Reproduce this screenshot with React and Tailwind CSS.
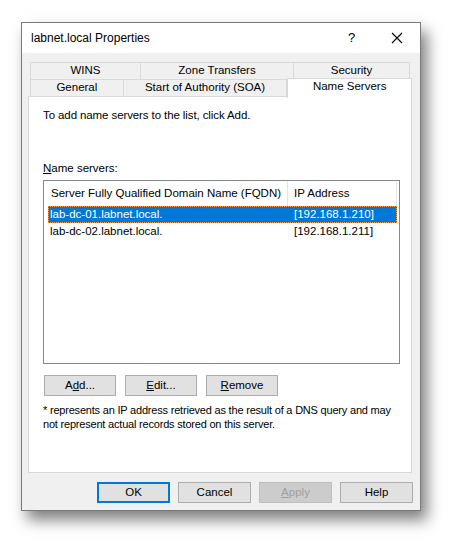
import React from "react";

const font = { fontFamily: '"Liberation Sans", Arial, sans-serif' };

function Btn({ children, primary, disabled, w = "w-[73px]" }) {
  let cls = "border-[#adadad] bg-[#e1e1e1] text-black";
  if (primary) cls = "border-2 border-[#0078d7] bg-[#e1e1e1] text-black";
  if (disabled) cls = "border-[#bfbfbf] bg-[#cccccc] text-[#a0a0a0]";
  return (
    <div
      className={`${w} h-[21px] border flex items-center justify-center text-[11.5px] ${cls}`}
    >
      {children}
    </div>
  );
}

function Tab({ label, w, selected }) {
  if (selected) {
    return (
      <div
        className={`${w} h-[20px] -mt-[2px] -mb-[1px] relative z-10 bg-white border border-b-0 border-[#d9d9d9] flex items-center justify-center text-[11.5px] pb-[3px]`}
      >
        {label}
      </div>
    );
  }
  return (
    <div
      className={`${w} h-[18px] bg-[#f0f0f0] border border-[#d9d9d9] -ml-px first:ml-0 flex items-center justify-center text-[11.5px]`}
    >
      {label}
    </div>
  );
}

export default function App() {
  return (
    <div className="w-[463px] h-[553px] bg-white pl-[21px] pt-[22px]" style={font}>
      <div className="w-[400px] h-[489px] border border-[#7a7a7a] bg-[#f0f0f0] shadow-[6px_9px_14px_rgba(0,0,0,0.5)] flex flex-col">
        {/* Title bar */}
        <div className="h-[30px] bg-white flex items-center pl-[9px] text-[12px] text-black">
          <span className="flex-1">labnet.local Properties</span>
          <span className="w-[45px] text-center text-[13px]">?</span>
          <span className="w-[45px] flex justify-center mr-[1px]">
            <svg width="12" height="12" viewBox="0 0 12 12">
              <path d="M1 1L11 11M11 1L1 11" stroke="#000" strokeWidth="1.1" />
            </svg>
          </span>
        </div>

        {/* Body */}
        <div className="flex-1 pl-[6px] pr-[8px] pt-[9px]">
          {/* Tabs */}
          <div className="pl-[2px]">
            <div className="flex">
              <Tab label="WINS" w="w-[111px]" />
              <Tab label="Zone Transfers" w="w-[154px]" />
              <Tab label="Security" w="w-[117px]" />
            </div>
            <div className="flex -mt-px items-end">
              <Tab label="General" w="w-[94px]" />
              <Tab label="Start of Authority (SOA)" w="w-[165px]" />
              <Tab label="Name Servers" w="w-[125px]" selected />
            </div>
          </div>

          {/* Panel */}
          <div className="w-[384px] h-[377px] -mt-px bg-white border border-[#d9d9d9] pl-[14px] pt-[11px] text-[11.5px] text-black">
            <div className="leading-[15px] tracking-[-0.1px]">
              To add name servers to the list, click Add.
            </div>
            <div className="leading-[15px] mt-[38px]">
              <span className="underline">N</span>ame servers:
            </div>
            <div className="w-[357px] h-[184px] mt-[4px] border border-[#828790] bg-white">
              <div className="flex h-[25px] items-center pl-[3px] whitespace-nowrap">
                <div className="w-[241px] h-full flex items-center pl-[4px] border-r border-[#e5e5e5]">
                  Server Fully Qualified Domain Name (FQDN)
                </div>
                <div className="w-[109px] h-full flex items-center pl-[6px] border-r border-[#e5e5e5]">
                  IP Address
                </div>
              </div>
              <div className="ml-[4px] w-[349px] h-[17px] bg-[#0078d7] text-white flex items-center border border-dotted border-[#f5a050]">
                <span className="w-[240px] pl-[1px]">lab-dc-01.labnet.local.</span>
                <span className="pl-[5px]">[192.168.1.210]</span>
              </div>
              <div className="ml-[4px] w-[349px] h-[17px] flex items-center border border-transparent">
                <span className="w-[240px] pl-[1px]">lab-dc-02.labnet.local.</span>
                <span className="pl-[5px]">[192.168.1.211]</span>
              </div>
            </div>

            <div className="flex gap-[9px] mt-[11px] pl-[1px]">
              <Btn w="w-[72px]">
                A<span className="underline">d</span>d...
              </Btn>
              <Btn w="w-[72px]">
                <span className="underline">E</span>dit...
              </Btn>
              <Btn w="w-[72px]">
                <span className="underline">R</span>emove
              </Btn>
            </div>

            <div className="mt-[7px] leading-[14px] whitespace-nowrap text-[11px] tracking-[-0.2px]">
              * represents an IP address retrieved as the result of a DNS query and may
              <br />
              not represent actual records stored on this server.
            </div>
          </div>

          {/* Bottom buttons */}
          <div className="flex justify-end gap-[8px] mt-[9px] -mr-[1px]">
            <Btn primary>OK</Btn>
            <Btn>Cancel</Btn>
            <Btn disabled>
              <span className="underline">A</span>pply
            </Btn>
            <Btn>Help</Btn>
          </div>
        </div>
      </div>
    </div>
  );
}
